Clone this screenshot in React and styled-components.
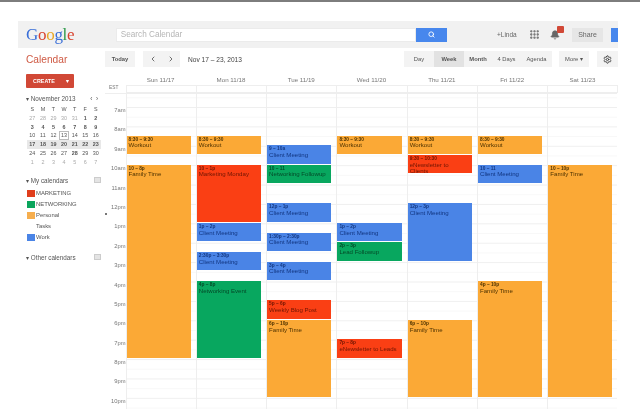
import React from 'react';
import styled, { createGlobalStyle } from 'styled-components';
import { Search, Settings, Bell, ChevronLeft, ChevronRight, Grip } from 'lucide-react';

const Global = createGlobalStyle`
  html, body { margin: 0; padding: 0; background: #fff; overflow: hidden; }
  * { box-sizing: border-box; }
`;

const HOUR = 19.4;
const HOUR_7 = 13; // y of the 7am line inside the grid

const Page = styled.div`
  width: 640px; height: 409px; overflow: hidden; background: #fff;
  font-family: "Liberation Sans", Arial, sans-serif; color: #555;
  filter: blur(0.65px);
`;
const TopRule = styled.div`height: 2px; background: #7d7d7d;`;
const Frame = styled.div`
  margin: 19px 22px 0 18px; width: 600px; height: 388px;
  display: flex; flex-direction: column;
`;
const GoogleBar = styled.header`
  height: 27px; flex: none; background: #f1f1f1; display: flex; align-items: center;
  padding-left: 8px; overflow: hidden;
`;
const Logo = styled.div`
  width: 90px; font-family: "Liberation Serif", serif; font-size: 17px; letter-spacing: -0.3px;
  line-height: 1; margin-top: -1px;
`;
const Letter = styled.span`color: ${p => p.$c};`;
const SearchBox = styled.div`
  width: 301px; height: 14px; background: #fff; border: 1px solid #ebebeb; color: #b5b5b5;
  font-size: 8.2px; display: flex; align-items: center; padding-left: 4px;
`;
const SearchButton = styled.div`
  width: 31px; height: 14px; background: #4787ed; color: #fff;
  display: flex; align-items: center; justify-content: center;
`;
const UserArea = styled.div`
  margin-left: 50px; display: flex; align-items: center; color: #666; font-size: 6.5px; flex: 1;
`;
const UserName = styled.span`width: 32px;`;
const GridIcon = styled.span`width: 21px; display: flex; color: #666;`;
const BellWrap = styled.span`position: relative; width: 22px; display: flex; color: #666;`;
const Badge = styled.span`
  position: absolute; left: 7px; top: -4px; width: 7px; height: 7px; background: #d14836; border-radius: 1px;
`;
const ShareButton = styled.div`
  width: 31px; height: 14px; background: #e6e6e6; color: #666; font-size: 7px;
  display: flex; align-items: center; justify-content: center;
`;
const Avatar = styled.div`margin-left: 8px; width: 7px; height: 14px; background: #4787ed;`;

const Toolbar = styled.div`
  height: 22px; flex: none; display: flex; align-items: center; padding-left: 8px;
`;
const Brand = styled.div`width: 79px; color: #cf5a44; font-size: 10.2px;`;
const TButton = styled.div`
  height: 16px; width: ${p => p.$w}px; margin-left: ${p => p.$ml || 0}px;
  background: ${p => p.$active ? '#e2e2e2' : '#f3f3f3'};
  color: #555; font-size: 5.8px; font-weight: ${p => p.$bold ? 700 : 400};
  display: flex; align-items: center; justify-content: center; gap: ${p => p.$gap || 5}px; flex: none;
`;
const DateRange = styled.div`margin-left: 8px; width: 216px; font-size: 6.6px; color: #444;`;
const Segment = styled.div`display: flex;`;

const Body = styled.div`flex: 1; display: flex; min-height: 0;`;
const Sidebar = styled.aside`
  width: 87px; flex: none; padding: 4px 4px 0 8px; position: relative;
`;
const Create = styled.div`
  width: 48px; height: 14px; background: #d14836; color: #fff; font-size: 5.4px; font-weight: 700;
  display: flex; align-items: center; justify-content: space-between; padding: 0 4px 0 7px; border-radius: 1px;
`;
const MiniHead = styled.div`
  margin-top: 7px; display: flex; justify-content: space-between; font-size: 6.3px; color: #555; padding-right: 3px;
`;
const MiniGrid = styled.div`
  margin-top: 3px; margin-left: 1px; width: 74px; display: grid; grid-template-columns: repeat(7, 10.6px);
  grid-auto-rows: 8.8px; font-size: 5.4px; text-align: center; line-height: 8.8px;
`;
const MiniCell = styled.div`
  color: ${p => p.$dim ? '#aaa' : '#555'};
  font-weight: ${p => p.$bold ? 700 : 400};
  background: ${p => p.$week ? '#e8e8e8' : 'transparent'};
  outline: ${p => p.$today ? '1px solid #bbb' : 'none'};
  outline-offset: -1px;
`;
const SectionHead = styled.div`
  margin-top: ${p => p.$mt}px; display: flex; justify-content: space-between; align-items: center;
  font-size: 6.3px; color: #555;
`;
const Toggle = styled.span`width: 7px; height: 6px; background: #e4e4e4; border: 1px solid #ccc;`;
const CalRow = styled.div`
  display: flex; align-items: center; gap: 1px; height: 11px; padding-left: 1px; font-size: 5.9px; color: #555;
`;
const Swatch = styled.span`width: 8px; height: 7px; background: ${p => p.$c}; flex: none;`;
const CalList = styled.div`margin-top: 4px;`;
const Splitter = styled.span`
  position: absolute; right: -2px; top: 143px; width: 2px; height: 2px; background: #777;
`;

const Main = styled.main`flex: 1; min-width: 0; display: flex; flex-direction: column; padding-right: 1px;`;
const HeadRow = styled.div`
  display: grid; grid-template-columns: 20.5px repeat(7, 70.3px); height: 15px; flex: none; align-items: end;
  font-size: 6.2px; color: #777; text-align: center; padding-bottom: 2px;
`;
const AllDay = styled.div`
  display: grid; grid-template-columns: 20.5px repeat(7, 70.3px); height: 8px; flex: none;
`;
const Est = styled.div`font-size: 4.8px; color: #777; line-height: 6px; padding-left: 4px;`;
const AllDayCell = styled.div`
  border: 1px solid #eeeeee; border-right-width: ${p => p.$last ? 1 : 0}px;
`;
const Grid = styled.div`
  flex: 1; display: grid; grid-template-columns: 20.5px repeat(7, 70.3px); overflow: hidden;
  border-top: 1px solid #eeeeee; min-height: 0;
`;
const Gutter = styled.div`padding-top: ${HOUR_7}px;`;
const HourLabel = styled.div`
  height: ${HOUR}px; font-size: 5.8px; color: #777; text-align: right; line-height: 7px; white-space: nowrap;
`;
const DayCol = styled.div`
  position: relative; border-left: 1px solid #eeeeee; border-right: ${p => p.$last ? 1 : 0}px solid #eeeeee;
  background-image:
    linear-gradient(#efefef 1px, transparent 1px),
    linear-gradient(#f8f8f8 1px, transparent 1px);
  background-size: 100% ${HOUR}px, 100% ${HOUR}px;
  background-position: 0 ${HOUR_7}px, 0 ${HOUR_7 + HOUR / 2}px;
`;
const COLORS = {
  o: ['#fba936', '#4d3200'],
  r: ['#fa3f14', '#6e1503'],
  b: ['#4a84e6', '#123680'],
  g: ['#08a75f', '#044a28'],
};
const Event = styled.div`
  position: absolute; left: 0; right: 5px; overflow: hidden;
  background: ${p => COLORS[p.$k][0]}; color: ${p => COLORS[p.$k][1]};
  padding: 1px 4px 0 2px; line-height: 5.4px;
`;
const EvTime = styled.div`font-size: 4.8px; font-weight: 700; white-space: nowrap;`;
const EvTitle = styled.div`font-size: 6.1px; line-height: 6px; margin-top: 0.3px;`;

const W = { t: 8.5, e: 9.5, k: 'o', a: '8:30 – 9:30', n: 'Workout' };
const F = (s, e, a) => ({ t: s, e, k: 'o', a, n: 'Family Time' });
const C = (s, e, a) => ({ t: s, e, k: 'b', a, n: 'Client Meeting' });

const days = [
  { name: 'Sun 11/17', ev: [W, F(10, 20, '10 – 8p')] },
  { name: 'Mon 11/18', ev: [W, { t: 10, e: 13, k: 'r', a: '10 – 1p', n: 'Marketing Monday' }, C(13, 14, '1p – 2p'), C(14.5, 15.5, '2:30p – 3:30p'), { t: 16, e: 20, k: 'g', a: '4p – 8p', n: 'Networking Event' }] },
  { name: 'Tue 11/19', ev: [C(9, 10, '9 – 10a'), { t: 10, e: 11, k: 'g', a: '10 – 11', n: 'Networking Followup' }, C(12, 13, '12p – 1p'), C(13.5, 14.5, '1:30p – 2:30p'), C(15, 16, '3p – 4p'), { t: 17, e: 18, k: 'r', a: '5p – 6p', n: 'Weekly Blog Post' }, F(18, 22, '6p – 10p')] },
  { name: 'Wed 11/20', ev: [W, C(13, 14, '1p – 2p'), { t: 14, e: 15, k: 'g', a: '2p – 3p', n: 'Lead Followup' }, { t: 19, e: 20, k: 'r', a: '7p – 8p', n: 'eNewsletter to Leads' }] },
  { name: 'Thu 11/21', ev: [W, { t: 9.5, e: 10.5, k: 'r', a: '9:30 – 10:30', n: 'eNewsletter to Clients' }, C(12, 15, '12p – 3p'), F(18, 22, '6p – 10p')] },
  { name: 'Fri 11/22', ev: [W, C(10, 11, '10 – 11'), F(16, 22, '4p – 10p')] },
  { name: 'Sat 11/23', ev: [F(10, 22, '10 – 10p')] },
];
const hours = ['7am', '8am', '9am', '10am', '11am', '12pm', '1pm', '2pm', '3pm', '4pm', '5pm', '6pm', '7pm', '8pm', '9pm', '10pm'];
const mini = [
  [27, 28, 29, 30, 31, 1, 2], [3, 4, 5, 6, 7, 8, 9], [10, 11, 12, 13, 14, 15, 16],
  [17, 18, 19, 20, 21, 22, 23], [24, 25, 26, 27, 28, 29, 30], [1, 2, 3, 4, 5, 6, 7],
];
const cals = [['#e03e1c', 'MARKETING'], ['#0aa55c', 'NETWORKING'], ['#f6ae4e', 'Personal'], ['#fff', 'Tasks'], ['#4a84e6', 'Work']];

export default function App() {
  return (
    <Page>
      <Global />
      <TopRule />
      <Frame>
        <GoogleBar>
          <Logo>
            <Letter $c="#3a6fd8">G</Letter><Letter $c="#d8432f">o</Letter><Letter $c="#e8a825">o</Letter>
            <Letter $c="#3a6fd8">g</Letter><Letter $c="#2f9a4a">l</Letter><Letter $c="#d8432f">e</Letter>
          </Logo>
          <SearchBox>Search Calendar</SearchBox>
          <SearchButton><Search size={7} strokeWidth={3} /></SearchButton>
          <UserArea>
            <UserName>+Linda</UserName>
            <GridIcon><Grip size={11} strokeWidth={3} /></GridIcon>
            <BellWrap><Bell size={10} fill="#666" /><Badge /></BellWrap>
            <ShareButton>Share</ShareButton>
            <Avatar />
          </UserArea>
        </GoogleBar>
        <Toolbar>
          <Brand>Calendar</Brand>
          <TButton $w={30} $bold>Today</TButton>
          <TButton $w={37} $ml={8} $gap={10}>
            <ChevronLeft size={8} strokeWidth={2.5} /><ChevronRight size={8} strokeWidth={2.5} />
          </TButton>
          <DateRange>Nov 17 – 23, 2013</DateRange>
          <Segment>
            <TButton $w={30}>Day</TButton>
            <TButton $w={30} $active $bold>Week</TButton>
            <TButton $w={28} $bold>Month</TButton>
            <TButton $w={29}>4 Days</TButton>
            <TButton $w={31}>Agenda</TButton>
          </Segment>
          <TButton $w={30} $ml={7}>More ▾</TButton>
          <TButton $w={21} $ml={8}><Settings size={9} strokeWidth={2.6} color="#444" /></TButton>
        </Toolbar>
        <Body>
          <Sidebar>
            <Create><span>CREATE</span><span>▼</span></Create>
            <MiniHead><span>▾ November 2013</span><span>‹ &nbsp;›</span></MiniHead>
            <MiniGrid>
              {['S', 'M', 'T', 'W', 'T', 'F', 'S'].map((d, i) => <MiniCell key={i}>{d}</MiniCell>)}
              {mini.map((row, r) => row.map((d, i) => (
                <MiniCell
                  key={`${r}-${i}`}
                  $dim={(r === 0 && d > 20) || r === 5}
                  $week={r === 3}
                  $today={r === 2 && d === 13}
                  $bold={r === 3 || r === 1 || (r === 0 && d < 3) || (r === 4 && d === 28)}
                >{d}</MiniCell>
              )))}
            </MiniGrid>
            <SectionHead $mt={10}><span>▾ My calendars</span><Toggle /></SectionHead>
            <CalList>
              {cals.map(([c, n]) => <CalRow key={n}><Swatch $c={c} />{n}</CalRow>)}
            </CalList>
            <SectionHead $mt={11}><span>▾ Other calendars</span><Toggle /></SectionHead>
            <Splitter />
          </Sidebar>
          <Main>
            <HeadRow>
              <span />
              {days.map(d => <span key={d.name}>{d.name}</span>)}
            </HeadRow>
            <AllDay>
              <Est>EST</Est>
              {days.map((d, i) => <AllDayCell key={d.name} $last={i === 6} />)}
            </AllDay>
            <Grid>
              <Gutter>
                {hours.map(h => <HourLabel key={h}>{h}</HourLabel>)}
              </Gutter>
              {days.map((d, i) => (
                <DayCol key={d.name} $last={i === 6}>
                  {d.ev.map(ev => (
                    <Event
                      key={ev.a + ev.n}
                      $k={ev.k}
                      style={{
                        top: HOUR_7 + (ev.t - 7) * HOUR - 0.6,
                        height: (ev.e - ev.t) * HOUR - 0.8,
                      }}
                    >
                      <EvTime>{ev.a}</EvTime>
                      <EvTitle>{ev.n}</EvTitle>
                    </Event>
                  ))}
                </DayCol>
              ))}
            </Grid>
          </Main>
        </Body>
      </Frame>
    </Page>
  );
}
